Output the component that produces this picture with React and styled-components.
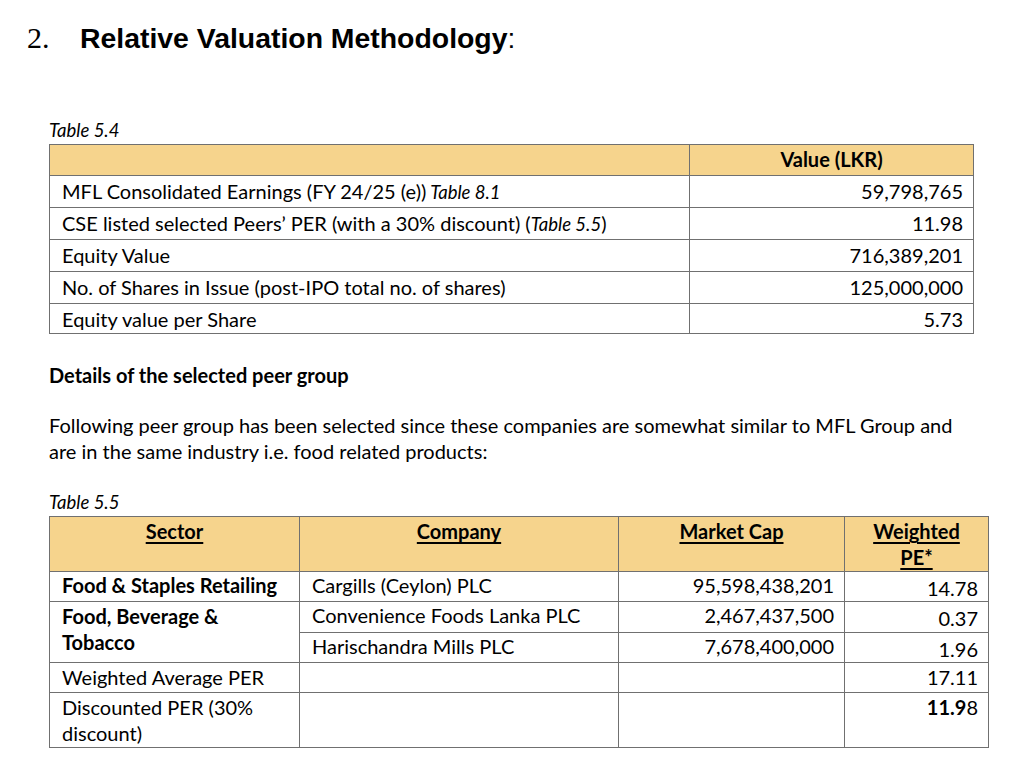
import styled, { createGlobalStyle } from "styled-components";

const GlobalStyle = createGlobalStyle`
	body {
		margin: 0;
		background: #ffffff;
		color: #000000;
		font-family: Lato, "Open Sans", sans-serif;
	}
`;

const Page = styled.div`
	width: 1024px;
	height: 779px;
	overflow: hidden;
	padding: 21px 0 0 27px;
	box-sizing: border-box;
`;

const Heading = styled.h2`
	margin: 0;
	display: flex;
	align-items: baseline;
	font-weight: normal;
	height: 40px;
`;

const HeadingNumber = styled.span`
	font-family: "Liberation Serif", serif;
	font-size: 30px;
	width: 53px;
`;

const HeadingTitle = styled.span`
	font-family: "Liberation Sans", Arial, sans-serif;
	font-size: 28.4px;
	font-weight: bold;
`;

const HeadingColon = styled.span`
	font-family: "Liberation Sans", Arial, sans-serif;
	font-size: 28px;
`;

const Body = styled.div`
	padding-left: 22px;
`;

const Caption = styled.div`
	font-style: italic;
	font-size: 18.5px;
	line-height: 22px;
	margin-top: ${(p) => p.$top}px;
	margin-bottom: 3px;
`;

const Table = styled.table`
	border-collapse: collapse;
	width: ${(p) => p.$width}px;
	table-layout: fixed;
	font-size: 20px;
	border: 1.5px solid #707070;
`;

const Th = styled.th`
	background: #f6d48d;
	font-weight: bold;
	text-align: center;
	vertical-align: top;
	height: ${(p) => p.$height || 31}px;
	padding: 1px 12px 0;
	border: 1.5px solid #707070;
	line-height: 26px;
	box-sizing: border-box;
`;

const Td = styled.td`
	height: ${(p) => p.$height || 32}px;
	padding: ${(p) => p.$padTop ?? 2}px 10px 0 12px;
	text-align: ${(p) => (p.$right ? "right" : "left")};
	vertical-align: top;
	font-weight: ${(p) => (p.$bold ? "bold" : "normal")};
	border: 1.5px solid #707070;
	border-top-color: #8c8c8c;
	line-height: 26px;
	box-sizing: border-box;
`;

const U = styled.span`
	text-decoration: underline;
	text-underline-offset: 3px;
`;

const Ital = styled.span`
	font-style: italic;
	font-size: 18.5px;
`;

const SubHeading = styled.div`
	font-weight: bold;
	font-size: 20px;
	margin-top: 28px;
	line-height: 26px;
`;

const Paragraph = styled.p`
	margin: 24px 0 0;
	font-size: 20px;
	line-height: 26px;
	width: 935px;
`;

const valuation = [
	["MFL Consolidated Earnings (FY 24/25 (e))", " Table 8.1", "59,798,765"],
	["CSE listed selected Peers’ PER (with a 30% discount) (", "Table 5.5", "11.98", ")"],
	["Equity Value", null, "716,389,201"],
	["No. of Shares in Issue (post-IPO total no. of shares)", null, "125,000,000"],
	["Equity value per Share", null, "5.73"],
];

export default function App() {
	return (
		<Page>
			<GlobalStyle />
			<Heading>
				<HeadingNumber>2.</HeadingNumber>
				<HeadingTitle>Relative Valuation Methodology</HeadingTitle>
				<HeadingColon>:</HeadingColon>
			</Heading>
			<Body>
				<Caption $top={58}>Table 5.4</Caption>
				<Table $width={924}>
					<colgroup>
						<col style={{ width: 640 }} />
						<col style={{ width: 284 }} />
					</colgroup>
					<thead>
						<tr>
							<Th />
							<Th>Value (LKR)</Th>
						</tr>
					</thead>
					<tbody>
						{valuation.map(([label, ref, value, tail], i) => (
							<tr key={label}>
								<Td $height={i === 4 ? 30 : 32}>
									{label}
									{ref && <Ital>{ref}</Ital>}
									{tail}
								</Td>
								<Td $right $height={i === 4 ? 30 : 32}>{value}</Td>
							</tr>
						))}
					</tbody>
				</Table>
				<SubHeading>Details of the selected peer group</SubHeading>
				<Paragraph>
					Following peer group has been selected since these companies are somewhat similar to MFL Group and
					are in the same industry i.e. food related products:
				</Paragraph>
				<Caption $top={27}>Table 5.5</Caption>
				<Table $width={939}>
					<colgroup>
						<col style={{ width: 250 }} />
						<col style={{ width: 319 }} />
						<col style={{ width: 226 }} />
						<col style={{ width: 144 }} />
					</colgroup>
					<thead>
						<tr>
							<Th $height={55}><U>Sector</U></Th>
							<Th $height={55}><U>Company</U></Th>
							<Th $height={55}><U>Market Cap</U></Th>
							<Th $height={55}>
								<U>Weighted</U>
								<br />
								<U>PE*</U>
							</Th>
						</tr>
					</thead>
					<tbody>
						<tr>
							<Td $bold $height={29} $padTop={0}>Food &amp; Staples Retailing</Td>
							<Td $height={29} $padTop={0}>Cargills (Ceylon) PLC</Td>
							<Td $right $height={29} $padTop={0}>95,598,438,201</Td>
							<Td $right $height={29} $padTop={3}>14.78</Td>
						</tr>
						<tr>
							<Td $bold rowSpan={2} $height={60} $padTop={1}>
								Food, Beverage &amp;
								<br />
								Tobacco
							</Td>
							<Td $height={31} $padTop={0}>Convenience Foods Lanka PLC</Td>
							<Td $right $height={31} $padTop={0}>2,467,437,500</Td>
							<Td $right $height={31} $padTop={3}>0.37</Td>
						</tr>
						<tr>
							<Td $height={30} $padTop={0}>Harischandra Mills PLC</Td>
							<Td $right $height={30} $padTop={0}>7,678,400,000</Td>
							<Td $right $height={30} $padTop={3}>1.96</Td>
						</tr>
						<tr>
							<Td $height={30} $padTop={1}>Weighted Average PER</Td>
							<Td $height={30} />
							<Td $height={30} />
							<Td $right $height={30} $padTop={1}>17.11</Td>
						</tr>
						<tr>
							<Td $height={55} $padTop={1}>
								Discounted PER (30%
								<br />
								discount)
							</Td>
							<Td $height={55} />
							<Td $height={55} />
							<Td $right $height={55} $padTop={1}>
								<b>11.9</b>8
							</Td>
						</tr>
					</tbody>
				</Table>
			</Body>
		</Page>
	);
}
